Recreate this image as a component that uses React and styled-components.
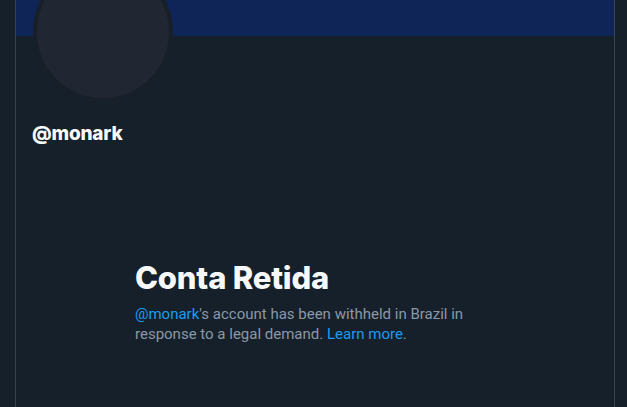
import React from "react";
import styled, { createGlobalStyle } from "styled-components";

const Global = createGlobalStyle`
  html, body { margin: 0; padding: 0; background: #15202b; }
  body { font-family: Inter, "Noto Sans", "Liberation Sans", sans-serif; overflow: hidden; }
`;

const Column = styled.main`
  margin-left: 15px;
  width: 598px;
  min-height: 407px;
  border-left: 1px solid #38444d;
  border-right: 1px solid #38444d;
  display: flex;
  flex-direction: column;
`;

const Banner = styled.div`
  height: 36px;
  background: #0f2557;
`;

const Header = styled.div`
  padding-left: 17px;
  display: flex;
  flex-direction: column;
`;

const Avatar = styled.div`
  width: 132px;
  height: 132px;
  margin-top: -74px;
  border-radius: 50%;
  border: 4px solid #172029;
  background: #202732;
`;

const Handle = styled.div`
  margin-top: 20px;
  margin-left: -1px;
  color: #f7f9f9;
  font-size: 19px;
  line-height: 24px;
  font-weight: 800;
  letter-spacing: -0.2px;
`;

const Empty = styled.section`
  align-self: center;
  width: 360px;
  margin-top: 114px;
  display: flex;
  flex-direction: column;
  gap: 8px;
`;

const Title = styled.h1`
  margin: 0;
  color: #f7f9f9;
  font-size: 31px;
  line-height: 36px;
  font-weight: 800;
  letter-spacing: -0.2px;
`;

const Text = styled.p`
  margin: 0;
  color: #8b98a5;
  font-family: Roboto, "Liberation Sans", sans-serif;
  font-size: 15px;
  line-height: 20px;
  font-weight: 400;
`;

const Link = styled.a`
  color: #1d9bf0;
  text-decoration: none;
`;

export default function App() {
  return (
    <>
      <Global />
      <Column>
        <Banner />
        <Header>
          <Avatar />
          <Handle>@monark</Handle>
        </Header>
        <Empty>
          <Title>Conta Retida</Title>
          <Text>
            <Link href="#">@monark</Link>'s account has been withheld in Brazil in response to a legal demand.{" "}
            <Link href="#">Learn more</Link>.
          </Text>
        </Empty>
      </Column>
    </>
  );
}
